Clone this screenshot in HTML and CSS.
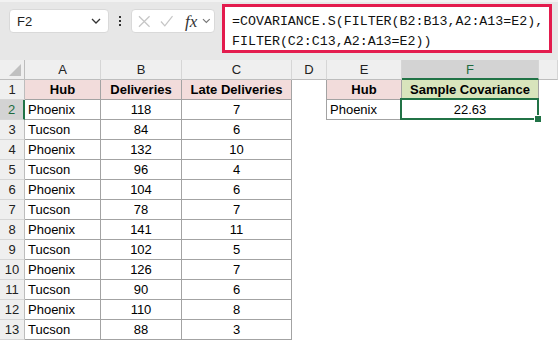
FILE: index.html
```html
<!DOCTYPE html>
<html lang="en">
<head>
  <meta charset="UTF-8" />
  <title>Sample Covariance</title>
  <link rel="stylesheet" href="styles.css">
</head>
<body>

  <header class="toolbar">
    <div class="name-box">
      <span>F2</span>
      <svg class="chev" width="10" height="6" viewBox="0 0 10 6"><path d="M1 1l4 4 4-4" fill="none" stroke="#333" stroke-width="1.3"/></svg>
    </div>
    <div class="dots"><i></i><i></i><i></i></div>
    <div class="fx-box">
      <svg width="13" height="13" viewBox="0 0 13 13"><path d="M1 1l11 11M12 1L1 12" stroke="#c6c6c6" stroke-width="1.3" fill="none"/></svg>
      <svg width="14" height="12" viewBox="0 0 14 12"><path d="M1 6.5l4 4.5 8-10" stroke="#c6c6c6" stroke-width="1.3" fill="none"/></svg>
      <span class="fx">fx</span>
      <svg width="9" height="6" viewBox="0 0 9 6"><path d="M1 1l3.5 3.5L8 1" fill="none" stroke="#777" stroke-width="1.2"/></svg>
    </div>
    <div class="formula">=COVARIANCE.S(FILTER(B2:B13,A2:A13=E2),<br>FILTER(C2:C13,A2:A13=E2))</div>
  </header>

  <main class="sheet">
    <!-- column headers -->
    <div class="ch corner"><span class="tri"></span></div>
    <div class="ch">A</div>
    <div class="ch">B</div>
    <div class="ch">C</div>
    <div class="ch">D</div>
    <div class="ch">E</div>
    <div class="ch sel">F</div>
    <div class="ch"></div>

    <div class="rh">1</div>
    <div class="b pink c bold">Hub</div>
    <div class="b pink c bold">Deliveries</div>
    <div class="b pink c bold">Late Deliveries</div>
    <div class="edge"></div>
    <div class="b pink c bold">Hub</div>
    <div class="b green c bold">Sample Covariance</div>
    <div></div>

    <div class="rh sel">2</div>
    <div class="b">Phoenix</div>
    <div class="b c">118</div>
    <div class="b c">7</div>
    <div class="edge"></div>
    <div class="b">Phoenix</div>
    <div class="b c active">22.63</div>
    <div></div>

    <div class="rh">3</div>
    <div class="b">Tucson</div><div class="b c">84</div><div class="b c">6</div>
    <div></div><div></div><div></div><div></div>

    <div class="rh">4</div>
    <div class="b">Phoenix</div><div class="b c">132</div><div class="b c">10</div>
    <div></div><div></div><div></div><div></div>

    <div class="rh">5</div>
    <div class="b">Tucson</div><div class="b c">96</div><div class="b c">4</div>
    <div></div><div></div><div></div><div></div>

    <div class="rh">6</div>
    <div class="b">Phoenix</div><div class="b c">104</div><div class="b c">6</div>
    <div></div><div></div><div></div><div></div>

    <div class="rh">7</div>
    <div class="b">Tucson</div><div class="b c">78</div><div class="b c">7</div>
    <div></div><div></div><div></div><div></div>

    <div class="rh">8</div>
    <div class="b">Phoenix</div><div class="b c">141</div><div class="b c">11</div>
    <div></div><div></div><div></div><div></div>

    <div class="rh">9</div>
    <div class="b">Tucson</div><div class="b c">102</div><div class="b c">5</div>
    <div></div><div></div><div></div><div></div>

    <div class="rh">10</div>
    <div class="b">Phoenix</div><div class="b c">126</div><div class="b c">7</div>
    <div></div><div></div><div></div><div></div>

    <div class="rh">11</div>
    <div class="b">Tucson</div><div class="b c">90</div><div class="b c">6</div>
    <div></div><div></div><div></div><div></div>

    <div class="rh">12</div>
    <div class="b">Phoenix</div><div class="b c">110</div><div class="b c">8</div>
    <div></div><div></div><div></div><div></div>

    <div class="rh">13</div>
    <div class="b">Tucson</div><div class="b c">88</div><div class="b c">3</div>
    <div></div><div></div><div></div><div></div>
  </main>

</body>
</html>
```

FILE: styles.css
```css
body {
  margin: 0;
  width: 558px;
  height: 342px;
  overflow: hidden;
  background: #ffffff;
  font-family: 'Liberation Sans', Arial, sans-serif;
  font-size: 13px;
  color: #000;
}

/* formula bar */
.toolbar {
  box-sizing: border-box;
  height: 60px;
  display: flex;
  align-items: flex-start;
  padding: 9px 0 0 9px;
  background: #e7e7e7;
  border-top: 2px solid #f2f2f2;
}

.name-box, .fx-box {
  box-sizing: border-box;
  height: 24px;
  margin-top: -2px;
  background: #fff;
  border: 1px solid #d9d9d9;
  border-radius: 4px;
  display: flex;
  align-items: center;
}

.name-box {
  width: 100px;
  padding: 0 7px 0 7px;
  justify-content: space-between;
  color: #1f1f1f;
}

.dots {
  width: 22px;
  height: 24px;
  margin-top: -2px;
  display: flex;
  flex-direction: column;
  align-items: center;
  justify-content: center;
  gap: 2px;
}

.dots i {
  width: 2px;
  height: 2px;
  background: #333;
}

.fx-box {
  width: 84px;
  padding: 0 3px 0 6px;
  gap: 9px;
}

.fx-box .fx {
  font-family: 'Liberation Serif', serif;
  font-style: italic;
  font-size: 17px;
  color: #333;
  margin-left: 3px;
  margin-right: -4px;
  line-height: 1;
}

.formula {
  box-sizing: border-box;
  width: 330px;
  height: 49px;
  margin: -7px 0 0 7px;
  padding: 5px 0 0 7px;
  background: #fff;
  border: 3px solid #e31b4d;
  font-family: 'Liberation Mono', 'DejaVu Sans Mono', monospace;
  font-size: 13.3px;
  line-height: 20px;
  color: #111;
  white-space: nowrap;
}

/* worksheet */
.sheet {
  display: grid;
  grid-template-columns: 25px 76px 81px 110px 35px 75px 137px 1fr;
  grid-auto-rows: 20px;
}

.sheet > div {
  box-sizing: border-box;
  padding: 0 3px;
  display: flex;
  align-items: center;
  white-space: nowrap;
  overflow: hidden;
}

.ch {
  background: #efefef;
  border-right: 1px solid #d6d6d6;
  border-bottom: 1px solid #bdbdbd;
  justify-content: center;
  color: #222;
}

.ch.sel {
  background: #d3d3d3;
  color: #1e6b3f;
  border-bottom: 2px solid #217346;
}

.corner {
  position: relative;
  border-right-color: #bdbdbd;
}

.tri {
  position: absolute;
  right: 3px;
  bottom: 3px;
  width: 0;
  height: 0;
  border-left: 12px solid transparent;
  border-bottom: 12px solid #c0c0c0;
}

.rh {
  background: #efefef;
  border-right: 1px solid #bdbdbd;
  border-bottom: 1px solid #d6d6d6;
  justify-content: center;
  color: #222;
}

.rh.sel {
  background: #d3d3d3;
  color: #1e6b3f;
  border-right: 2px solid #217346;
}

.b {
  border-right: 1px solid #a3a3a3;
  border-bottom: 1px solid #a3a3a3;
}

.edge {
  border-right: 1px solid #a3a3a3;
}

.c {
  justify-content: center;
}

.bold {
  font-weight: bold;
}

.pink {
  background: #f2dcdb;
}

.green {
  background: #d8e4bc;
}

.sheet > .active {
  overflow: visible;
  position: relative;
}

.active::after {
  content: "";
  position: absolute;
  left: -2px;
  top: -2px;
  right: -1px;
  bottom: -1px;
  border: 2px solid #217346;
}

.active::before {
  content: "";
  position: absolute;
  right: -4px;
  bottom: -4px;
  width: 6px;
  height: 6px;
  background: #217346;
  border: 1px solid #fff;
  z-index: 1;
}
```
